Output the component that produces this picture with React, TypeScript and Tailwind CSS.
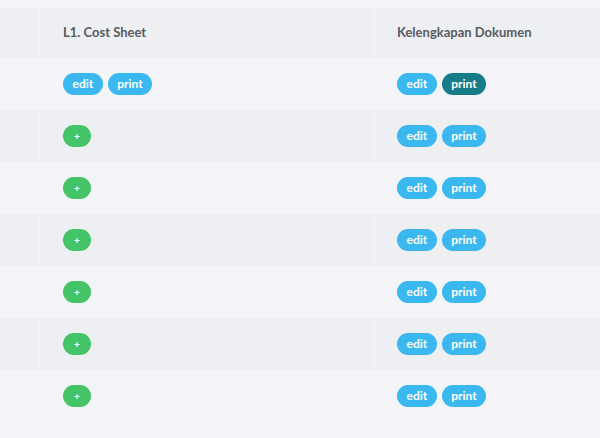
const rows = [
  { first: "edit", dark: true },
  { first: "add" },
  { first: "add" },
  { first: "add" },
  { first: "add" },
  { first: "add" },
  { first: "add" },
];

function Pill({ label, tone }: { label: string; tone: "blue" | "teal" | "green" }) {
  const color =
    tone === "blue" ? "bg-[#3bb8ef]" : tone === "teal" ? "bg-[#177c8a]" : "bg-[#45c467]";
  return (
    <span
      className={`${color} inline-flex h-[22px] items-center justify-center rounded-full px-[9.5px] text-[12px] font-bold text-white leading-none`}
    >
      {label}
    </span>
  );
}

export default function App() {
  return (
    <div className="min-h-[438px] w-[600px] bg-[#f3f4f8] pt-2 font-['Lato','Noto_Sans',sans-serif]">
      <div className="grid grid-cols-[40px_335px_225px]">
        <div className="h-[50px] border-r border-[#f4f5f8] bg-[#eeeff3]" />
        <div className="flex h-[50px] items-center border-r border-[#f4f5f8] bg-[#eeeff3] pl-[23px] text-[13px] font-bold text-[#575b62]">
          L1. Cost Sheet
        </div>
        <div className="flex h-[50px] items-center bg-[#eeeff3] pl-[22px] text-[13px] font-bold text-[#575b62]">
          Kelengkapan Dokumen
        </div>
        {rows.map((r, i) => {
          const bg = i % 2 === 0 ? "bg-[#f3f4f8]" : "bg-[#eeeff3]";
          return [
            <div key={`a${i}`} className={`h-[52px] border-r border-[#f5f6f9] ${bg}`} />,
            <div
              key={`b${i}`}
              className={`flex h-[52px] items-center gap-[5px] border-r border-[#f5f6f9] pl-[23px] ${bg}`}
            >
              {r.first === "edit" ? (
                <>
                  <Pill label="edit" tone="blue" />
                  <Pill label="print" tone="blue" />
                </>
              ) : (
                <span className="inline-flex h-[22px] w-[28px] items-center justify-center rounded-full bg-[#45c467] text-[10px] font-bold text-white leading-none">
                  +
                </span>
              )}
            </div>,
            <div key={`c${i}`} className={`flex h-[52px] items-center gap-[5px] pl-[22px] ${bg}`}>
              <Pill label="edit" tone="blue" />
              <Pill label="print" tone={r.dark ? "teal" : "blue"} />
            </div>,
          ];
        })}
      </div>
    </div>
  );
}
